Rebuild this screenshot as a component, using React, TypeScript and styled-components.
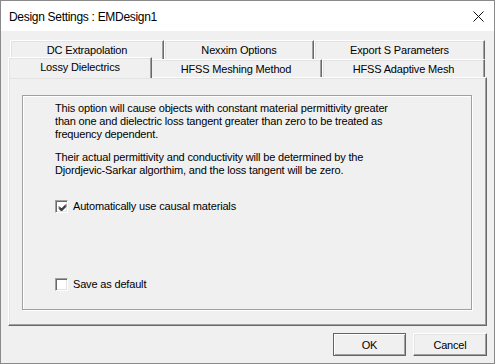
import React from 'react';
import styled, {createGlobalStyle} from "styled-components";

type TabProps = {
    label: string
    width: number
    selected?: boolean
}

const backTabs: Array<TabProps> = [
    {label: "DC Extrapolation", width: 154},
    {label: "Nexxim Options", width: 150},
    {label: "Export S Parameters", width: 171},
];

const frontTabs: Array<TabProps> = [
    {label: "Lossy Dielectrics", width: 140, selected: true},
    {label: "HFSS Meshing Method", width: 172},
    {label: "HFSS Adaptive Mesh", width: 163},
];

const Tab = (props: TabProps) => (
    <StyledTab $selected={!!props.selected} style={{width: props.width}}>
        {props.label}
    </StyledTab>
);

const CheckBox = (props: { checked?: boolean, label: string }) => (
    <CheckRow>
        <Box>
            {props.checked && (
                <svg width="9" height="9" viewBox="0 0 9 9">
                    <path d="M1 3.5 L3.5 6 L8 1.5 M1 4.5 L3.5 7 L8 2.5 M1 5.5 L3.5 8 L8 3.5"
                          stroke="#000" strokeWidth="1" fill="none"/>
                </svg>
            )}
        </Box>
        <CheckLabel>{props.label}</CheckLabel>
    </CheckRow>
);

export default function App() {
    return (
        <>
            <GlobalStyle/>
            <Window>
                <TitleBar>
                    <Title>Design Settings : EMDesign1</Title>
                    <svg width="11" height="11" viewBox="0 0 11 11">
                        <path d="M0.5 0.5 L10.5 10.5 M10.5 0.5 L0.5 10.5" stroke="#111" strokeWidth="1"/>
                    </svg>
                </TitleBar>
                <Body>
                    <TabRow $top>
                        {backTabs.map(t => <Tab key={t.label} {...t}/>)}
                    </TabRow>
                    <TabRow>
                        {frontTabs.map(t => <Tab key={t.label} {...t}/>)}
                    </TabRow>
                    <Panel>
                        <GroupBox>
                            <Paragraph>
                                This option will cause objects with constant material permittivity greater<br/>
                                than one and dielectric loss tangent greater than zero to be treated as<br/>
                                frequency dependent.
                            </Paragraph>
                            <Paragraph $gap={10}>
                                Their actual permittivity and conductivity will be determined by the<br/>
                                Djordjevic-Sarkar algorthim, and the loss tangent will be zero.
                            </Paragraph>
                            <Spacer $h={23}/>
                            <CheckBox checked label="Automatically use causal materials"/>
                            <Spacer $h={65}/>
                            <CheckBox label="Save as default"/>
                        </GroupBox>
                    </Panel>
                    <ButtonRow>
                        <Button $default>OK</Button>
                        <Button>Cancel</Button>
                    </ButtonRow>
                </Body>
            </Window>
        </>
    );
}

const GlobalStyle = createGlobalStyle`
  html, body {
    margin: 0;
    padding: 0;
    background: #f0f0f0;
  }
`

const Window = styled.div`
  width: 495px;
  height: 364px;
  box-sizing: border-box;
  border: 1px solid #8a8a8a;
  display: flex;
  flex-direction: column;
  font-family: "Liberation Sans", Arial, sans-serif;
  font-size: 11px;
  letter-spacing: -0.17px;
  color: #000;
  overflow: hidden;
`

const TitleBar = styled.div`
  height: 30px;
  flex-shrink: 0;
  background: #fff;
  display: flex;
  align-items: center;
  justify-content: space-between;
  padding: 1px 10px 0 8px;
  box-sizing: border-box;
`

const Title = styled.span`
  font-size: 12px;
  letter-spacing: -0.3px;
  color: #000;
`

const Body = styled.div`
  flex: 1;
  background: #f0f0f0;
  display: flex;
  flex-direction: column;
  padding: 9px 7px 0 7px;
`

const TabRow = styled.div<{ $top?: boolean }>`
  display: flex;
  height: ${p => p.$top ? 19 : 18}px;
  padding: 0 2px;
`

const StyledTab = styled.div<{ $selected: boolean }>`
  box-sizing: border-box;
  flex-shrink: 0;
  display: flex;
  justify-content: center;
  align-items: center;
  background: #f0f0f0;
  border-top: 1px solid #fff;
  border-left: 1px solid #fff;
  border-right: 1px solid #696969;
  box-shadow: inset -1px 0 0 #a0a0a0, inset 0 1px 0 #e3e3e3, inset 1px 0 0 #e3e3e3;
  position: relative;
  z-index: ${p => p.$selected ? 2 : 0};
  margin: ${p => p.$selected ? "-2px -2px -1px -2px" : "0"};
  padding-bottom: ${p => p.$selected ? 3 : 0}px;
  ${p => p.$selected ? "width: 144px !important;" : ""}
`

const Panel = styled.div`
  height: 249px;
  box-sizing: border-box;
  border-top: 1px solid #fff;
  border-left: 1px solid #fff;
  border-right: 1px solid #696969;
  border-bottom: 1px solid #696969;
  box-shadow: inset -1px -1px 0 #a0a0a0, inset 1px 1px 0 #e3e3e3;
  padding: 17px 13px 14px 13px;
  display: flex;
`

const GroupBox = styled.div`
  flex: 1;
  border: 1px solid #a0a0a0;
  box-shadow: 1px 1px 0 #fff, inset 1px 1px 0 #fff;
  padding: 6px 0 0 32px;
  display: flex;
  flex-direction: column;
  margin-right: 1px;
  margin-bottom: 1px;
`

const Paragraph = styled.p<{ $gap?: number }>`
  margin: ${p => p.$gap || 0}px 0 0 0;
  line-height: 13px;
  white-space: nowrap;
`

const Spacer = styled.div<{ $h: number }>`
  height: ${p => p.$h}px;
  flex-shrink: 0;
`

const CheckRow = styled.div`
  display: flex;
  align-items: center;
  gap: 5px;
  height: 13px;
`

const Box = styled.div`
  width: 13px;
  height: 13px;
  box-sizing: border-box;
  background: #fff;
  border-top: 1px solid #a0a0a0;
  border-left: 1px solid #a0a0a0;
  border-right: 1px solid #fff;
  border-bottom: 1px solid #fff;
  box-shadow: inset 1px 1px 0 #696969, inset -1px -1px 0 #e3e3e3;
  display: flex;
  align-items: center;
  justify-content: center;
  padding: 1px 0 0 1px;
`

const CheckLabel = styled.span`
  line-height: 13px;
`

const ButtonRow = styled.div`
  display: flex;
  justify-content: flex-end;
  gap: 7px;
  padding-top: 7px;
`

const Button = styled.div<{ $default?: boolean }>`
  width: ${p => p.$default ? 73 : 74}px;
  height: 23px;
  box-sizing: border-box;
  display: flex;
  align-items: center;
  justify-content: center;
  background: #f0f0f0;
  border-top: 1px solid ${p => p.$default ? "#646464" : "#fff"};
  border-left: 1px solid ${p => p.$default ? "#646464" : "#fff"};
  border-right: 1px solid #646464;
  border-bottom: 1px solid #646464;
  box-shadow: ${p => p.$default
          ? "inset 1px 1px 0 #fff, inset -1px -1px 0 #a0a0a0"
          : "inset -1px -1px 0 #a0a0a0, inset 1px 1px 0 #e3e3e3"};
`
